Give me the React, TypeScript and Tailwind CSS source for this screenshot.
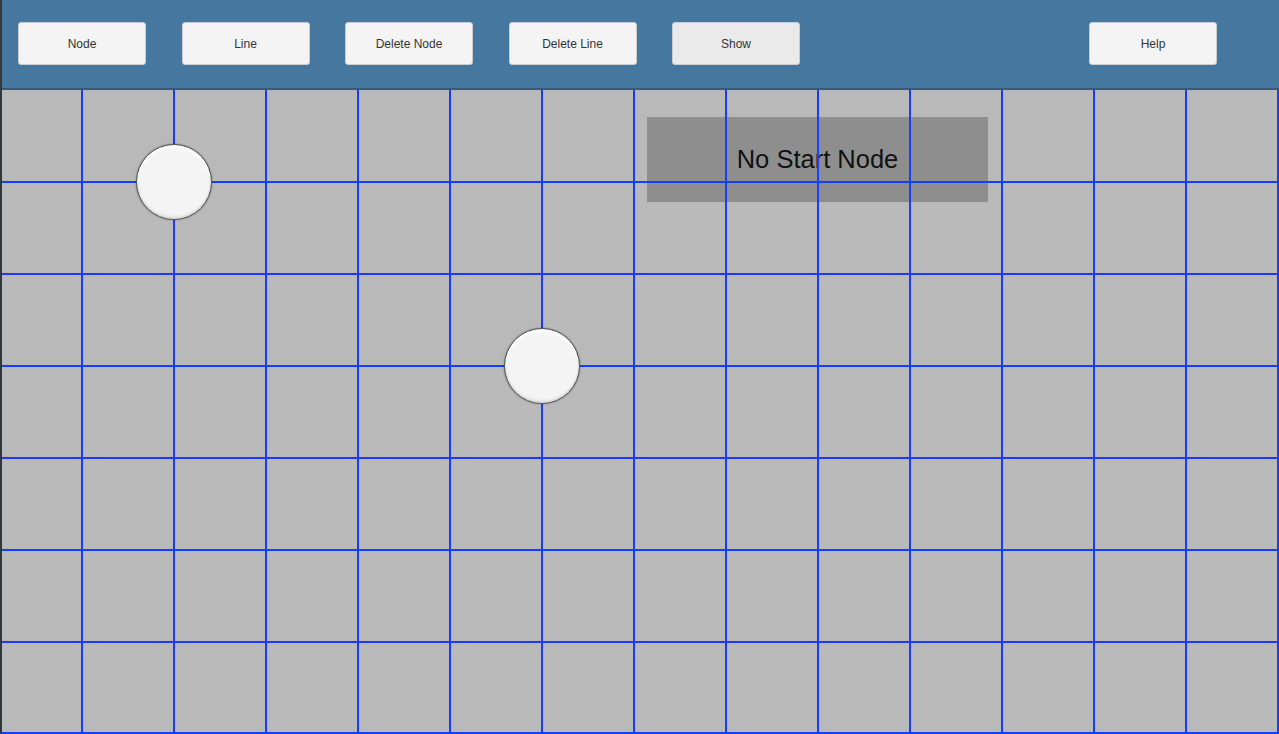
import React from "react";

const BUTTONS = [
  { label: "Node", active: false },
  { label: "Line", active: false },
  { label: "Delete Node", active: false },
  { label: "Delete Line", active: false },
  { label: "Show", active: true },
];

// grid spacing in px, offsets relative to the canvas
const STEP = 92;
const V_LINES = Array.from({ length: 14 }, (_, i) => 80 + i * STEP);
const H_LINES = [...Array.from({ length: 6 }, (_, i) => 92 + i * STEP), 643];

const NODES = [
  { x: 172, y: 92 },
  { x: 540, y: 276 },
];

const ToolButton = ({ label, active }: { label: string; active?: boolean }) => (
  <button
    className={`w-[128px] h-[43px] rounded-[3px] border border-[#c9cdd2] text-[12px] text-[#333] ${
      active ? "bg-[#eaeaea]" : "bg-[#f4f4f4]"
    }`}
    style={{ fontFamily: '"Liberation Sans", Arial, sans-serif' }}
  >
    {label}
  </button>
);

export default function App() {
  return (
    <div
      className="w-full h-[734px] flex flex-col border-l-2 border-[#33383d] overflow-hidden"
      style={{ fontFamily: '"Liberation Sans", Arial, sans-serif' }}
    >
      {/* Toolbar */}
      <div className="h-[90px] shrink-0 bg-[#46779f] border-b-2 border-[#3a5a78] flex items-start pt-[22px] pl-[16px] pr-[62px]">
        <div className="flex gap-[35.5px]">
          {BUTTONS.map((b) => (
            <ToolButton key={b.label} label={b.label} active={b.active} />
          ))}
        </div>
        <div className="ml-auto">
          <ToolButton label="Help" />
        </div>
      </div>

      {/* Canvas */}
      <div className="relative flex-1 bg-[#b9b9b9]">
        <div className="absolute left-[645px] top-[27px] w-[341px] h-[85px] bg-[#8e8e8e] flex items-center justify-center pb-[1px]">
          <span className="text-[25.5px] text-[#111]">No Start Node</span>
        </div>

        <svg className="absolute inset-0 w-full h-full" width="1277" height="644">
          {V_LINES.map((x) => (
            <line key={`v${x}`} x1={x} y1={0} x2={x} y2={644} stroke="#1a3cff" strokeWidth={2} />
          ))}
          {H_LINES.map((y) => (
            <line key={`h${y}`} x1={0} y1={y} x2={1277} y2={y} stroke="#1a3cff" strokeWidth={2} />
          ))}
        </svg>

        {NODES.map((n, i) => (
          <div
            key={i}
            className="absolute w-[76px] h-[76px] -translate-x-1/2 -translate-y-1/2 rounded-full bg-[#f4f4f4] border-[1.5px] border-[#555] shadow-[inset_0_3px_2px_rgba(255,255,255,0.9),inset_0_-2px_3px_rgba(0,0,0,0.12),0_0_2px_rgba(0,0,0,0.45)]"
            style={{ left: n.x, top: n.y }}
          />
        ))}
      </div>
    </div>
  );
}
